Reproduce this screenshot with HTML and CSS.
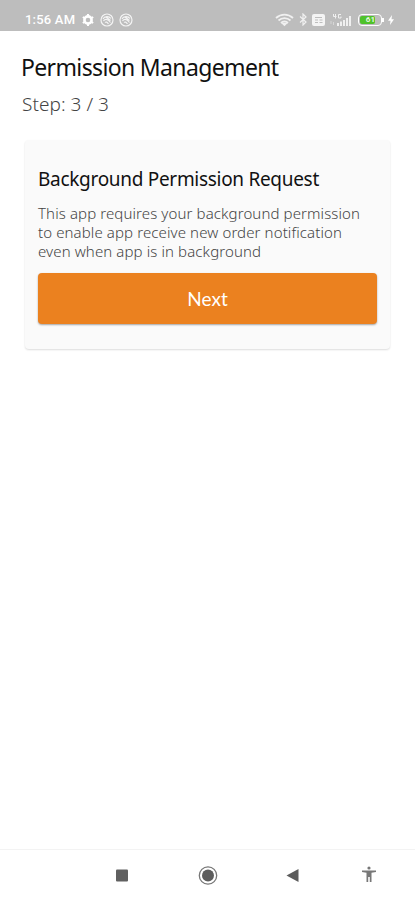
FILE: index.html
```
<!DOCTYPE html>
<html lang="en">
  <head>
    <meta charset="utf-8" />
    <title>Permission Management</title>
    <link rel="stylesheet" href="styles.css">
  </head>

  <body>
    <div class="status-bar">
      <span class="time">1:56 AM</span>
      <svg class="gear" width="12" height="12" viewBox="0 0 12 12">
        <circle cx="6" cy="6" r="3.600" fill="none" stroke="#fff" stroke-width="2.600" />
        <path d="M6 0v2M6 10v2M.8 3l1.700 1M9.500 8l1.700 1M.8 9l1.700-1M9.500 4l1.700-1" stroke="#fff" stroke-width="2" />
      </svg>
      <svg class="round" width="14" height="14" viewBox="0 0 14 14" fill="none" stroke="#f4f4f4" stroke-width="1.200">
        <circle cx="7" cy="7" r="6" />
        <path d="M3 6c1.500-3 6-3 8-.5M3.500 8c1.500-2.500 4-2.500 7 1.500M5 9.500c1-1 2-.5 3.500 1.500M6 4l4.500 3.500" />
      </svg>
      <svg class="round" width="14" height="14" viewBox="0 0 14 14" fill="none" stroke="#f4f4f4" stroke-width="1.200">
        <circle cx="7" cy="7" r="6" />
        <path d="M3 6c1.500-3 6-3 8-.5M3.500 8c1.500-2.500 4-2.500 7 1.500M5 9.500c1-1 2-.5 3.500 1.500M6 4l4.500 3.500" />
      </svg>

      <div class="status-right">
        <svg width="19" height="14" viewBox="0 0 19 14" fill="none" stroke="#f0f0f0" stroke-width="1.800">
          <path d="M1 5c5-4.500 12-4.500 17 0M3.500 7.500c3.500-3.200 8.500-3.200 12 0M6 10c2-2 5-2 7 0" />
          <path d="M8.500 11l1 1 1-1z" fill="#f0f0f0" />
        </svg>
        <svg class="bluetooth" width="8" height="13" viewBox="0 0 8 13" fill="none" stroke="#f0f0f0" stroke-width="1.200">
          <path d="M1 3.500l6 5.500-3 3V1l3 3-6 5.500" />
        </svg>
        <svg class="hd" width="13" height="12" viewBox="0 0 13 12">
          <rect width="13" height="12" rx="2" fill="#f4f4f4" />
          <path d="M3 3.500h7M3 6h3M7.500 6h3M3 8.500h3M7.500 8.500h3" stroke="#bdbdbd" />
        </svg>
        <svg class="signal" width="22" height="14" viewBox="0 0 22 14" fill="none" stroke="#f0f0f0">
          <path d="M3.500 1v2.500h3M5.500 1v4.500M11 1.500H8.500v3.500H11V3.500" />
          <path d="M1 8v3M3.500 9v3" opacity=".5" />
          <path d="M8 13v-3M11 13V8.500M14 13V7M17 13V5M20 13V3" stroke-width="2" />
        </svg>
        <div class="battery"><div class="level">61</div></div>
        <svg class="bolt" width="6" height="10" viewBox="0 0 6 10">
          <path d="M4 0L0 5.800h2.500L2 10l4-5.800H3.500z" fill="#fff" />
        </svg>
      </div>
    </div>

    <main>
      <h1>Permission Management</h1>
      <p class="step">Step: 3 / 3</p>

      <div class="card">
        <h2>Background Permission Request</h2>
        <p class="line">This app requires your background permission</p>
        <p class="line">to enable app receive new order notification</p>
        <p class="line">even when app is in background</p>
        <button type="button">Next</button>
      </div>
    </main>

    <nav>
      <svg width="86" height="24" viewBox="0 0 86 24">
        <rect x="37" y="6.500" width="12" height="12" rx="1" fill="#606060" />
      </svg>
      <svg width="86" height="24" viewBox="0 0 86 24">
        <circle cx="43" cy="12.500" r="8.700" fill="none" stroke="#777" stroke-width="1.300" />
        <circle cx="43" cy="12.500" r="6" fill="#5c5c5c" />
      </svg>
      <svg width="86" height="24" viewBox="0 0 86 24">
        <path d="M47.500 6v13L35.500 12.500z" fill="#5c5c5c" />
      </svg>
      <svg width="66" height="24" viewBox="0 0 66 24">
        <circle cx="32" cy="5" r="1.600" fill="#777" />
        <path d="M25 7.500h14v1.500l-4.500.7V19h-1.700v-5h-1.600v5h-1.700V9.700L25 9z" fill="#777" />
      </svg>
    </nav>
  </body>
</html>
```
FILE: styles.css
```
* {
  box-sizing: border-box;
}

html,
body {
  margin: 0;
  padding: 0;
}

body {
  display: flex;
  flex-direction: column;
  height: 900px;
  background: #fff;
  font-family: "Noto Sans", sans-serif;
  overflow: hidden;
}

.status-bar {
  display: flex;
  align-items: center;
  height: 31px;
  padding: 8px 21px 0 25px;
  background: #bdbdbd;
  color: #fff;
}

.time {
  width: 57px;
  font: 500 13px/16px Roboto, sans-serif;
  letter-spacing: 0.2px;
  white-space: nowrap;
}

.round {
  margin-left: 6px;
}

.round + .round {
  margin-left: 5px;
}

.status-right {
  display: flex;
  align-items: center;
  margin-left: auto;
}

.bluetooth {
  margin-left: 5px;
}

.hd {
  margin-left: 5px;
}

.signal {
  margin-left: 5px;
}

.battery {
  position: relative;
  width: 24px;
  height: 12px;
  margin-left: 6px;
  margin-right: 1px;
  padding: 1px;
  border: 1px solid #fff;
  border-radius: 4px;
}

.battery::after {
  content: "";
  position: absolute;
  right: -3px;
  top: 3px;
  width: 2px;
  height: 4px;
  background: #fff;
}

.level {
  width: 15px;
  height: 8px;
  border-radius: 2px;
  background: #4fc22b;
  color: #e6f8df;
  font: bold 8px/8px Roboto, sans-serif;
  text-align: right;
}

.bolt {
  margin-left: 5px;
}

main {
  flex: 1;
  padding: 20px 25px 0;
}

h1,
h2,
p {
  margin: 0;
  font-weight: 400;
  white-space: nowrap;
}

h1 {
  margin-left: -4px;
  font-size: 23px;
  line-height: 32px;
  letter-spacing: -0.64px;
  color: #111;
}

.step {
  margin: 7px 0 0 -3px;
  font-size: 19px;
  font-weight: 300;
  line-height: 28px;
  letter-spacing: 0.05px;
  color: #444;
}

.card {
  height: 209px;
  margin-top: 22px;
  padding: 25px 13px 0;
  border-radius: 4px;
  background: #fafafa;
  box-shadow: 0 1px 2px rgba(0, 0, 0, 0.14);
}

h2 {
  margin-bottom: 11px;
  font-size: 19px;
  line-height: 28px;
  letter-spacing: -0.3px;
  color: #111;
}

.line {
  font-size: 15px;
  font-weight: 300;
  line-height: 19px;
  letter-spacing: 0.11px;
  color: #444;
}

button {
  display: block;
  width: 100%;
  height: 51px;
  margin-top: 12px;
  padding: 0;
  border: none;
  border-radius: 4px;
  background: #eb811f;
  box-shadow: 0 1px 2px rgba(0, 0, 0, 0.35);
  color: #fff;
  font: 19px Lato, sans-serif;
}

nav {
  display: flex;
  align-items: center;
  height: 51px;
  padding-left: 79px;
  border-top: 1px solid #f3f3f3;
}
```
